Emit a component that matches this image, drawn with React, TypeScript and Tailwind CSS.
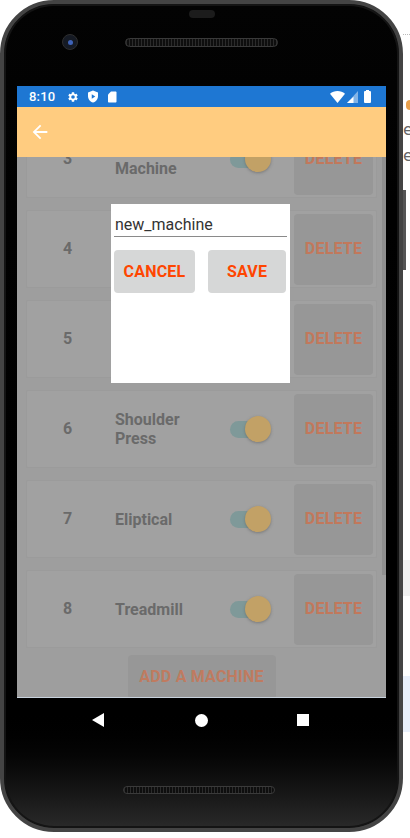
import React from "react";

type Machine = { id: number; name: string };

const machines: Machine[] = [
  { id: 3, name: "Chest Machine" },
  { id: 4, name: "Leg Press" },
  { id: 5, name: "Bench" },
  { id: 6, name: "Shoulder Press" },
  { id: 7, name: "Eliptical" },
  { id: 8, name: "Treadmill" },
];

const Gear = () => (
  <svg width="12" height="12" viewBox="0 0 24 24" fill="#fff">
    <path d="M19.14 12.94c.04-.3.06-.61.06-.94s-.02-.64-.07-.94l2.03-1.58a.49.49 0 0 0 .12-.61l-1.92-3.32a.49.49 0 0 0-.59-.22l-2.39.96a7.03 7.03 0 0 0-1.62-.94l-.36-2.54a.48.48 0 0 0-.48-.41h-3.84a.47.47 0 0 0-.47.41l-.36 2.54c-.59.24-1.130.57-1.62.94l-2.39-.96a.48.48 0 0 0-.59.22L2.74 8.87a.47.47 0 0 0 .12.61l2.03 1.58c-.05.3-.09.63-.09.94s.02.64.07.94l-2.03 1.58a.49.49 0 0 0-.12.61l1.92 3.32c.12.22.37.29.59.22l2.39-.96c.5.38 1.03.7 1.62.94l.36 2.54c.05.24.24.41.48.41h3.840c.24 0 .44-.17.47-.41l.36-2.54c.59-.24 1.13-.56 1.62-.94l2.39.96c.22.08.47 0 .59-.22l1.92-3.32a.47.47 0 0 0-.12-.61l-2.01-1.58zM12 15.6A3.6 3.6 0 1 1 12 8.4a3.6 3.6 0 0 1 0 7.2z" />
  </svg>
);

const Shield = () => (
  <svg width="12" height="13" viewBox="0 0 24 26">
    <path d="M12 1 2 5v7c0 6.2 4.3 11.9 10 13 5.7-1.1 10-6.8 10-13V5L12 1z" fill="#fff" />
    <path d="M9.5 8.5v9l7-4.5z" fill="#1e77d3" />
  </svg>
);

const SdCard = () => (
  <svg width="10" height="12" viewBox="0 0 20 24" fill="#fff">
    <path d="M17 1H8L2 7v14c0 1.1.9 2 2 2h13c1.1 0 2-.9 2-2V3c0-1.1-.9-2-2-2z" />
  </svg>
);

const Wifi = () => (
  <svg width="15" height="12" viewBox="0 0 24 19" fill="#fff">
    <path d="M12 19 0 4.2C3.3 1.6 7.5 0 12 0s8.7 1.6 12 4.2L12 19z" />
  </svg>
);

const Signal = () => (
  <svg width="11" height="12" viewBox="0 0 22 24">
    <path d="M0 24h22V0z" fill="#fff" fillOpacity="0.45" />
    <path d="M0 24h13V11.5z" fill="#fff" />
  </svg>
);

const Battery = () => (
  <svg width="7" height="13" viewBox="0 0 14 26" fill="#fff">
    <path d="M10 2V0H4v2H2.5C1.1 2 0 3.1 0 4.5v19C0 24.9 1.1 26 2.5 26h9c1.4 0 2.5-1.1 2.5-2.5v-19C14 3.1 12.9 2 11.5 2H10z" />
  </svg>
);

const BackArrow = () => (
  <svg width="22" height="22" viewBox="0 0 24 24" fill="#fff">
    <path d="M20 11H7.83l5.59-5.59L12 4l-8 8 8 8 1.41-1.41L7.83 13H20v-2z" />
  </svg>
);

const Toggle = () => (
  <div className="flex items-center">
    <div className="w-[34px] h-[17px] rounded-full bg-[#7f9999]" />
    <div className="-ml-[19px] w-[26px] h-[26px] rounded-full bg-[#c2a166] shadow-[0_1px_3px_rgba(90,90,90,0.55)]" />
  </div>
);

const MachineRow = ({ machine }: { machine: Machine }) => (
  <div className="mt-[12px] ml-[9px] w-[351px] h-[78px] shrink-0 flex items-center bg-[#a1a1a1] border border-[#9b9b9b] rounded-[2px]">
    <span className="w-[81px] text-center text-[16px] font-bold text-[#6a6a6a]">{machine.id}</span>
    <span className="ml-[7px] w-[104px] text-[16px] leading-[19px] font-bold text-[#6a6a6a]">{machine.name}</span>
    <div className="ml-[11px]">
      <Toggle />
    </div>
    <button className="ml-[23px] w-[79px] h-[71px] rounded-[4px] bg-[#979797] text-[16px] font-bold text-[#c2785b] tracking-[0.2px]">
      DELETE
    </button>
  </div>
);

export default function App() {
  return (
    <div className="w-[410px] h-[838px] bg-white flex overflow-hidden font-['Roboto',sans-serif]">
      <div className="w-[403px] h-[832px] shrink-0 rounded-[54px] border-[4px] border-[#444] bg-gradient-to-b from-[#030303] via-[#000] via-85% to-[#2a2a2a] shadow-[inset_0_0_0_2px_#141414] flex flex-col">
        {/* top hardware */}
        <div className="h-[82px] flex flex-col">
          <div className="mt-[6px] mx-auto w-[26px] h-[8px] rounded-full bg-[#1c1c1c]" />
          <div className="mt-[16px] h-[16px] flex items-center">
            <div className="ml-[58px] w-[16px] h-[16px] rounded-full bg-[#151a24] border border-[#2e2e2e] flex items-center justify-center">
              <div className="w-[5px] h-[5px] rounded-full bg-[#3f63b8]" />
            </div>
            <div className="ml-[47px] w-[153px] h-[9px] rounded-full border border-[#3a3a3a] bg-[repeating-linear-gradient(90deg,#2b2b2b_0px,#2b2b2b_1px,#0e0e0e_1px,#0e0e0e_3px)]" />
          </div>
        </div>

        {/* screen */}
        <div className="ml-[13px] w-[369px] h-[612px] flex flex-col">
          <div className="h-[21px] bg-[#1e77d3] flex items-center pl-[12px] pr-[15px]">
            <span className="text-[13px] font-medium text-white tracking-[0.2px]">8:10</span>
            <div className="ml-[12px] flex items-center gap-[8px]">
              <Gear />
              <Shield />
              <SdCard />
            </div>
            <div className="ml-auto flex items-center gap-[2px]">
              <Wifi />
              <Signal />
              <div className="ml-[4px]">
                <Battery />
              </div>
            </div>
          </div>

          <div className="h-[50px] bg-[#ffcc80] flex items-center pl-[12px]">
            <BackArrow />
          </div>

          <div className="relative flex-1 overflow-hidden bg-[#9e9e9e] border-b border-[#c8d2dd]">
            <div className="-mt-[49px] flex flex-col">
              {machines.map((m) => (
                <MachineRow key={m.id} machine={m} />
              ))}
              <button className="mt-[7px] mx-auto w-[148px] h-[44px] rounded-[4px] bg-[#979797] text-[16px] font-bold text-[#bf7b60] tracking-[0.2px]">
                ADD A MACHINE
              </button>
            </div>

            <div className="absolute right-0 top-0 w-[4px] h-[418px] bg-[#8f8f8f]" />

            <div className="absolute left-[94px] top-[47px] w-[179px] h-[179px] bg-white flex flex-col px-[3px]">
              <div className="mt-[9px] h-[24px] border-b border-[#8a8a8a] pl-[1px] text-[16px] leading-[24px] text-[#333]">
                new_machine
              </div>
              <div className="mt-[13px] flex gap-[13px]">
                <button className="w-[81px] h-[43px] rounded-[4px] bg-[#d6d7d7] text-[16px] font-bold text-[#ff4500] tracking-[0.2px]">
                  CANCEL
                </button>
                <button className="w-[78px] h-[43px] rounded-[4px] bg-[#d6d7d7] text-[16px] font-bold text-[#ff4500] tracking-[0.2px]">
                  SAVE
                </button>
              </div>
            </div>
          </div>
        </div>

        {/* navigation bar */}
        <div className="h-[44px] flex items-center">
          <svg className="ml-[88px]" width="12" height="14" viewBox="0 0 12 14" fill="#fff">
            <path d="M12 0v14L0 7z" />
          </svg>
          <div className="ml-[91px] w-[13px] h-[13px] rounded-full bg-white" />
          <div className="ml-[89px] w-[12px] h-[12px] bg-white" />
        </div>

        {/* bottom speaker */}
        <div className="mt-[44px] ml-[119px] w-[152px] h-[8px] rounded-full border border-[#3a3a3a] bg-[repeating-linear-gradient(90deg,#2b2b2b_0px,#2b2b2b_1px,#0e0e0e_1px,#0e0e0e_3px)]" />
      </div>

      {/* page behind the device */}
      <div className="flex-1 flex flex-col">
        <div className="mt-[34px] h-[2px] border-t border-dotted border-[#bbb]" />
        <div className="mt-[64px] ml-[3px] w-[8px] h-[10px] rounded-full bg-[#e8a04c]" />
        <span className="mt-[10px] text-[16px] leading-[20px] text-[#666] font-['DejaVu_Sans',sans-serif]">e</span>
        <span className="mt-[6px] text-[16px] leading-[20px] text-[#666] font-['DejaVu_Sans',sans-serif]">e</span>
        <div className="mt-[24px] w-[3px] h-[80px] bg-[#555]" />
        <div className="mt-[290px] h-[36px] bg-[#f1f1f1]" />
        <div className="mt-[80px] h-[56px] bg-[#e9f0fb]" />
      </div>
    </div>
  );
}
